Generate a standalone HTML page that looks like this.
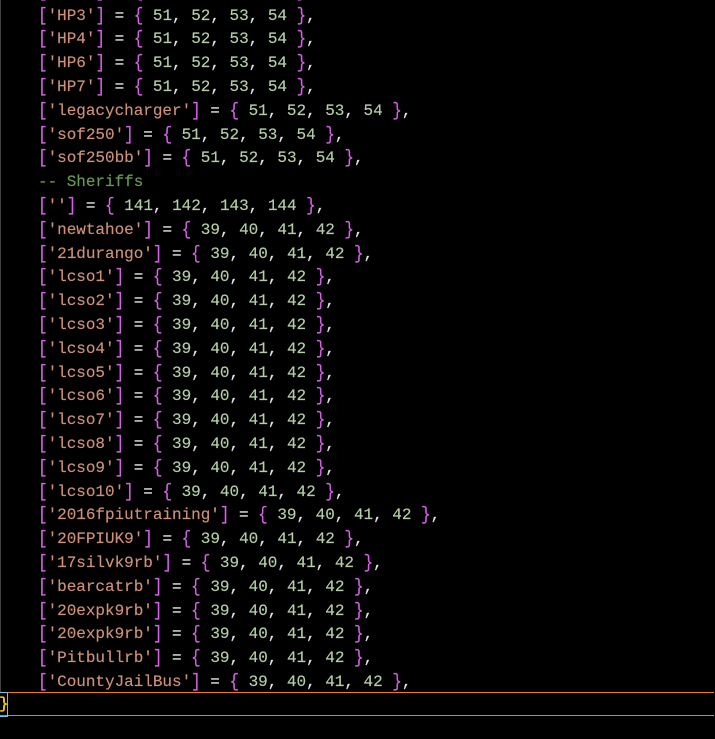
<!DOCTYPE html>
<html><head><meta charset="utf-8">
<style>
html,body{margin:0;padding:0;background:#000;width:715px;height:739px;overflow:hidden}
#c{position:relative;width:715px;height:739px;overflow:hidden;background:#000}
#t{position:absolute;left:-.5px;top:.6px;width:715px;height:692px}
.l{position:absolute;left:38.5px;height:24px;white-space:pre;font:16px/24px "Liberation Mono",monospace;letter-spacing:-.03px;color:#e4e4e4;-webkit-text-stroke:.15px currentColor}
.b{color:#d860e8;display:inline-block;transform:scaleY(1.16)}.s{color:#ce9178}.n{color:#b5cea8}.c{color:#6a9955}
</style></head><body><div id="c">
<div style="position:absolute;left:0;top:0;width:1px;height:692px;background:#404040"></div>
<div id="t">
<div class="l" style="top:-20.8px"><span class="b">[</span><span class="s">'HP2'</span><span class="b">]</span> = <span class="b">{</span> <span class="n">51</span>, <span class="n">52</span>, <span class="n">53</span>, <span class="n">54</span> <span class="b">}</span>,</div>
<div class="l" style="top:3px"><span class="b">[</span><span class="s">'HP3'</span><span class="b">]</span> = <span class="b">{</span> <span class="n">51</span>, <span class="n">52</span>, <span class="n">53</span>, <span class="n">54</span> <span class="b">}</span>,</div>
<div class="l" style="top:26.8px"><span class="b">[</span><span class="s">'HP4'</span><span class="b">]</span> = <span class="b">{</span> <span class="n">51</span>, <span class="n">52</span>, <span class="n">53</span>, <span class="n">54</span> <span class="b">}</span>,</div>
<div class="l" style="top:50.6px"><span class="b">[</span><span class="s">'HP6'</span><span class="b">]</span> = <span class="b">{</span> <span class="n">51</span>, <span class="n">52</span>, <span class="n">53</span>, <span class="n">54</span> <span class="b">}</span>,</div>
<div class="l" style="top:74.4px"><span class="b">[</span><span class="s">'HP7'</span><span class="b">]</span> = <span class="b">{</span> <span class="n">51</span>, <span class="n">52</span>, <span class="n">53</span>, <span class="n">54</span> <span class="b">}</span>,</div>
<div class="l" style="top:98.2px"><span class="b">[</span><span class="s">'legacycharger'</span><span class="b">]</span> = <span class="b">{</span> <span class="n">51</span>, <span class="n">52</span>, <span class="n">53</span>, <span class="n">54</span> <span class="b">}</span>,</div>
<div class="l" style="top:122px"><span class="b">[</span><span class="s">'sof250'</span><span class="b">]</span> = <span class="b">{</span> <span class="n">51</span>, <span class="n">52</span>, <span class="n">53</span>, <span class="n">54</span> <span class="b">}</span>,</div>
<div class="l" style="top:145.8px"><span class="b">[</span><span class="s">'sof250bb'</span><span class="b">]</span> = <span class="b">{</span> <span class="n">51</span>, <span class="n">52</span>, <span class="n">53</span>, <span class="n">54</span> <span class="b">}</span>,</div>
<div class="l" style="top:169.6px"><span class="c">-- Sheriffs</span></div>
<div class="l" style="top:193.4px"><span class="b">[</span><span class="s">''</span><span class="b">]</span> = <span class="b">{</span> <span class="n">141</span>, <span class="n">142</span>, <span class="n">143</span>, <span class="n">144</span> <span class="b">}</span>,</div>
<div class="l" style="top:217.2px"><span class="b">[</span><span class="s">'newtahoe'</span><span class="b">]</span> = <span class="b">{</span> <span class="n">39</span>, <span class="n">40</span>, <span class="n">41</span>, <span class="n">42</span> <span class="b">}</span>,</div>
<div class="l" style="top:241px"><span class="b">[</span><span class="s">'21durango'</span><span class="b">]</span> = <span class="b">{</span> <span class="n">39</span>, <span class="n">40</span>, <span class="n">41</span>, <span class="n">42</span> <span class="b">}</span>,</div>
<div class="l" style="top:264.8px"><span class="b">[</span><span class="s">'lcso1'</span><span class="b">]</span> = <span class="b">{</span> <span class="n">39</span>, <span class="n">40</span>, <span class="n">41</span>, <span class="n">42</span> <span class="b">}</span>,</div>
<div class="l" style="top:288.6px"><span class="b">[</span><span class="s">'lcso2'</span><span class="b">]</span> = <span class="b">{</span> <span class="n">39</span>, <span class="n">40</span>, <span class="n">41</span>, <span class="n">42</span> <span class="b">}</span>,</div>
<div class="l" style="top:312.4px"><span class="b">[</span><span class="s">'lcso3'</span><span class="b">]</span> = <span class="b">{</span> <span class="n">39</span>, <span class="n">40</span>, <span class="n">41</span>, <span class="n">42</span> <span class="b">}</span>,</div>
<div class="l" style="top:336.2px"><span class="b">[</span><span class="s">'lcso4'</span><span class="b">]</span> = <span class="b">{</span> <span class="n">39</span>, <span class="n">40</span>, <span class="n">41</span>, <span class="n">42</span> <span class="b">}</span>,</div>
<div class="l" style="top:360px"><span class="b">[</span><span class="s">'lcso5'</span><span class="b">]</span> = <span class="b">{</span> <span class="n">39</span>, <span class="n">40</span>, <span class="n">41</span>, <span class="n">42</span> <span class="b">}</span>,</div>
<div class="l" style="top:383.8px"><span class="b">[</span><span class="s">'lcso6'</span><span class="b">]</span> = <span class="b">{</span> <span class="n">39</span>, <span class="n">40</span>, <span class="n">41</span>, <span class="n">42</span> <span class="b">}</span>,</div>
<div class="l" style="top:407.6px"><span class="b">[</span><span class="s">'lcso7'</span><span class="b">]</span> = <span class="b">{</span> <span class="n">39</span>, <span class="n">40</span>, <span class="n">41</span>, <span class="n">42</span> <span class="b">}</span>,</div>
<div class="l" style="top:431.4px"><span class="b">[</span><span class="s">'lcso8'</span><span class="b">]</span> = <span class="b">{</span> <span class="n">39</span>, <span class="n">40</span>, <span class="n">41</span>, <span class="n">42</span> <span class="b">}</span>,</div>
<div class="l" style="top:455.2px"><span class="b">[</span><span class="s">'lcso9'</span><span class="b">]</span> = <span class="b">{</span> <span class="n">39</span>, <span class="n">40</span>, <span class="n">41</span>, <span class="n">42</span> <span class="b">}</span>,</div>
<div class="l" style="top:479px"><span class="b">[</span><span class="s">'lcso10'</span><span class="b">]</span> = <span class="b">{</span> <span class="n">39</span>, <span class="n">40</span>, <span class="n">41</span>, <span class="n">42</span> <span class="b">}</span>,</div>
<div class="l" style="top:502.8px"><span class="b">[</span><span class="s">'2016fpiutraining'</span><span class="b">]</span> = <span class="b">{</span> <span class="n">39</span>, <span class="n">40</span>, <span class="n">41</span>, <span class="n">42</span> <span class="b">}</span>,</div>
<div class="l" style="top:526.6px"><span class="b">[</span><span class="s">'20FPIUK9'</span><span class="b">]</span> = <span class="b">{</span> <span class="n">39</span>, <span class="n">40</span>, <span class="n">41</span>, <span class="n">42</span> <span class="b">}</span>,</div>
<div class="l" style="top:550.4px"><span class="b">[</span><span class="s">'17silvk9rb'</span><span class="b">]</span> = <span class="b">{</span> <span class="n">39</span>, <span class="n">40</span>, <span class="n">41</span>, <span class="n">42</span> <span class="b">}</span>,</div>
<div class="l" style="top:574.2px"><span class="b">[</span><span class="s">'bearcatrb'</span><span class="b">]</span> = <span class="b">{</span> <span class="n">39</span>, <span class="n">40</span>, <span class="n">41</span>, <span class="n">42</span> <span class="b">}</span>,</div>
<div class="l" style="top:598px"><span class="b">[</span><span class="s">'20expk9rb'</span><span class="b">]</span> = <span class="b">{</span> <span class="n">39</span>, <span class="n">40</span>, <span class="n">41</span>, <span class="n">42</span> <span class="b">}</span>,</div>
<div class="l" style="top:621.8px"><span class="b">[</span><span class="s">'20expk9rb'</span><span class="b">]</span> = <span class="b">{</span> <span class="n">39</span>, <span class="n">40</span>, <span class="n">41</span>, <span class="n">42</span> <span class="b">}</span>,</div>
<div class="l" style="top:645.6px"><span class="b">[</span><span class="s">'Pitbullrb'</span><span class="b">]</span> = <span class="b">{</span> <span class="n">39</span>, <span class="n">40</span>, <span class="n">41</span>, <span class="n">42</span> <span class="b">}</span>,</div>
<div class="l" style="top:669.4px"><span class="b">[</span><span class="s">'CountyJailBus'</span><span class="b">]</span> = <span class="b">{</span> <span class="n">39</span>, <span class="n">40</span>, <span class="n">41</span>, <span class="n">42</span> <span class="b">}</span>,</div>
</div>
<div style="position:absolute;left:0;top:692px;width:714px;height:1px;background:#f07c10"></div>
<div style="position:absolute;left:0;top:715px;width:714px;height:1px;background:#d9822b"></div>
<div style="position:absolute;left:0;top:692px;width:7px;height:23px;border-right:1px solid #6cc4e8;border-top:1px solid #6cc4e8;border-bottom:1px solid #6cc4e8"></div>
<div class="l" style="left:-1px;top:692px;color:#ffd700;-webkit-text-stroke:.3px #ffd700">}</div>
</div></body></html>
